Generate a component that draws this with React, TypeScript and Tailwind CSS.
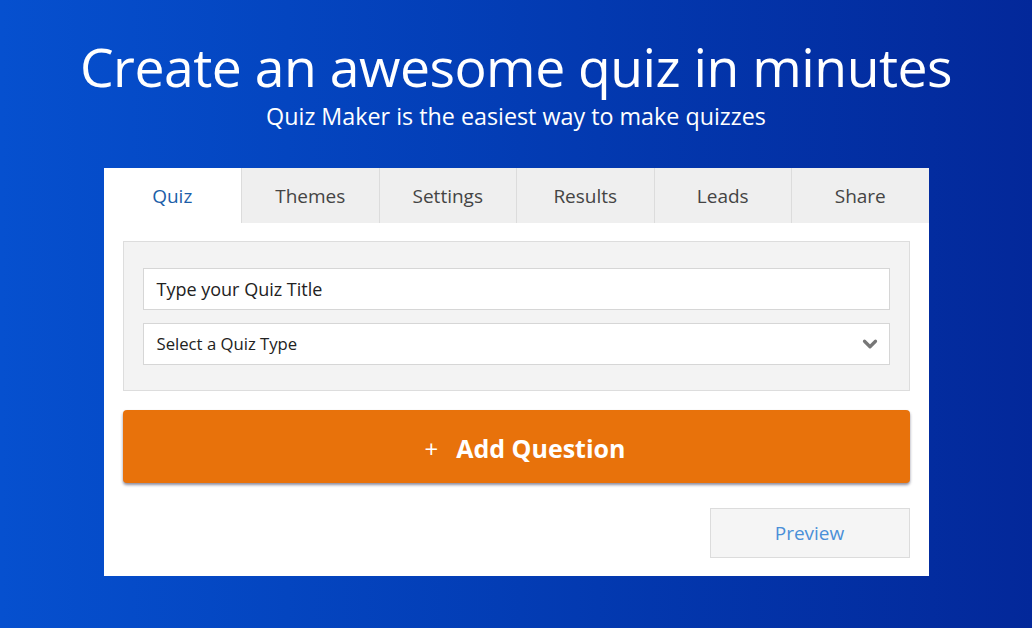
import { ChevronDown } from "lucide-react"

const tabs = ["Quiz", "Themes", "Settings", "Results", "Leads", "Share"]

export default function App() {
  return (
    <div
      className="w-full h-[628px] overflow-hidden bg-gradient-to-r from-[#0650cf] to-[#03289a] flex flex-col items-center"
      style={{ fontFamily: '"Open Sans", "Noto Sans", sans-serif' }}
    >
      <h1 className="mt-[33px] text-[53.5px] leading-[68px] text-white tracking-[-0.5px]">
        Create an awesome quiz in minutes
      </h1>
      <p className="text-[23.3px] leading-[28px] text-white mt-[1px]">
        Quiz Maker is the easiest way to make quizzes
      </p>

      <div className="mt-[38px] w-[825px] bg-white pb-[18px]">
        {/* Tabs */}
        <div className="grid grid-cols-6 h-[55px]">
          {tabs.map((tab, i) => (
            <div
              key={tab}
              className={
                i === 0
                  ? "flex items-center justify-center pt-[2px] bg-white text-[19px] text-[#1c5ea8]"
                  : "flex items-center justify-center pt-[2px] bg-[#efefef] border-l border-[#dcdcdc] text-[19px] text-[#444]"
              }
            >
              {tab}
            </div>
          ))}
        </div>

        <div className="px-[19px] pt-[18px]">
          {/* Form panel */}
          <div className="bg-[#f3f3f3] border border-[#dddddd] px-[19px] pt-[26px] pb-[25px] flex flex-col gap-[13px]">
            <div className="h-[42px] bg-white border border-[#d6d6d6] flex items-center px-[13px] text-[18px] text-[#222]">
              Type your Quiz Title
            </div>
            <div className="h-[42px] bg-white border border-[#d6d6d6] flex items-center justify-between pl-[13px] pr-[8px] text-[16.7px] text-[#222]">
              <span>Select a Quiz Type</span>
              <ChevronDown className="w-[22px] h-[22px] text-[#777]" strokeWidth={3.5} />
            </div>
          </div>

          {/* Add question */}
          <button className="mt-[19px] w-full h-[73px] rounded-[4px] bg-[#e8720b] text-white font-bold text-[25px] flex items-center justify-center gap-[18px] pl-[18px] pt-[4px] shadow-[0_2px_3px_rgba(0,0,40,0.45)]">
            <span className="font-normal text-[24px]">+</span>
            <span>Add Question</span>
          </button>

          {/* Preview */}
          <div className="mt-[25px] flex justify-end">
            <button className="w-[200px] h-[50px] bg-[#f5f5f5] border border-[#dcdcdc] text-[19px] text-[#4a8fd8]">
              Preview
            </button>
          </div>
        </div>
      </div>
    </div>
  )
}
